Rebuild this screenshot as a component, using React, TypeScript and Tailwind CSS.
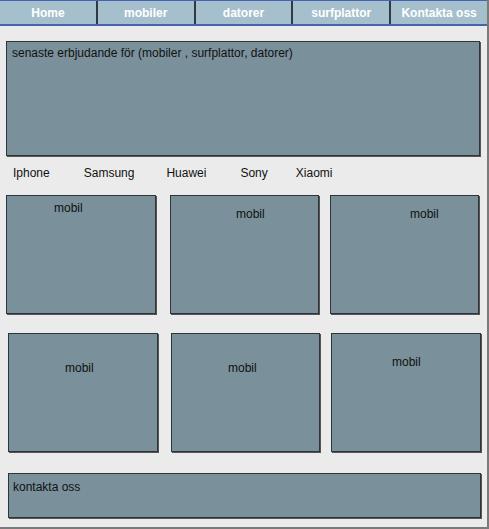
import React from "react";

const navItems = ["Home", "mobiler", "datorer", "surfplattor", "Kontakta oss"];

export default function App() {
  return (
    <div
      className="w-[489px] h-[529px] bg-[#ebebeb] border-r-2 border-b-2 border-[#7a7a7a] text-[12px] text-[#111] overflow-hidden"
      style={{ fontFamily: '"Liberation Sans", Arial, sans-serif' }}
    >
      <nav className="flex h-[26px] bg-[#a5bfcc] border-t border-b-2 border-r-2 border-[#4563b0] -mr-[2px]">
        {navItems.map((item, i) => (
          <div
            key={item}
            className={`flex-1 flex items-center justify-center font-bold text-white ${
              i < navItems.length - 1 ? "border-r-2 border-[#2f3b44]" : ""
            }`}
          >
            {item}
          </div>
        ))}
      </nav>

      <div className="ml-[6px] mt-[15px] w-[474px] h-[115px] bg-[#7a909b] border border-[#2f3437] shadow-[1px_1px_0_#555] px-[5px] pt-[2px]">
        senaste erbjudande för (mobiler , surfplattor, datorer)
      </div>

      <div className="flex h-[39px] pt-[8px]">
        <span className="ml-[13px]">Iphone</span>
        <span className="ml-[34px]">Samsung</span>
        <span className="ml-[32px]">Huawei</span>
        <span className="ml-[34px]">Sony</span>
        <span className="ml-[28px]">Xiaomi</span>
      </div>

      <div className="flex">
        <div className="ml-[6px] w-[150px] h-[119px] bg-[#7a909b] border border-[#2f3437] shadow-[1px_1px_0_#555] pl-[47px] pt-[3px]">
          mobil
        </div>
        <div className="ml-[14px] w-[149px] h-[119px] bg-[#7a909b] border border-[#2f3437] shadow-[1px_1px_0_#555] pl-[65px] pt-[9px]">
          mobil
        </div>
        <div className="ml-[11px] w-[149px] h-[119px] bg-[#7a909b] border border-[#2f3437] shadow-[1px_1px_0_#555] pl-[79px] pt-[9px]">
          mobil
        </div>
      </div>

      <div className="flex mt-[19px]">
        <div className="ml-[8px] w-[150px] h-[119px] bg-[#7a909b] border border-[#2f3437] shadow-[1px_1px_0_#555] pl-[56px] pt-[25px]">
          mobil
        </div>
        <div className="ml-[13px] w-[149px] h-[119px] bg-[#7a909b] border border-[#2f3437] shadow-[1px_1px_0_#555] pl-[56px] pt-[25px]">
          mobil
        </div>
        <div className="ml-[11px] w-[150px] h-[119px] bg-[#7a909b] border border-[#2f3437] shadow-[1px_1px_0_#555] pl-[60px] pt-[19px]">
          mobil
        </div>
      </div>

      <div className="ml-[8px] mt-[21px] w-[473px] h-[45px] bg-[#7a909b] border border-[#2f3437] shadow-[1px_1px_0_#555] px-[4px] pt-[4px]">
        kontakta oss
      </div>
    </div>
  );
}
